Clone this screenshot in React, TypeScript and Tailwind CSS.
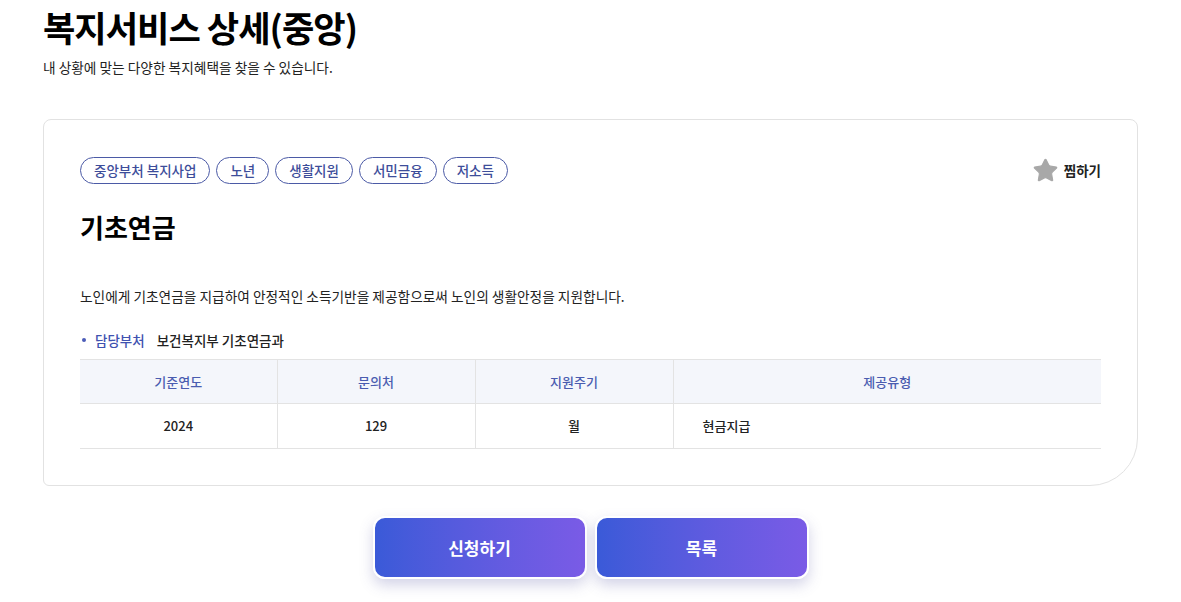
import { Star } from "lucide-react";

const tags = ["중앙부처 복지사업", "노년", "생활지원", "서민금융", "저소득"];

export default function App() {
  return (
    <div
      className="min-h-[602px] w-[1181px] bg-white text-[#111]"
      style={{ fontFamily: '"Noto Sans CJK KR", "Noto Sans", sans-serif' }}
    >
      <div className="px-[43px] pt-[4px]">
        <h1 className="text-[35.2px] font-bold leading-[46px] tracking-[-1px] text-black">
          복지서비스 상세(중앙)
        </h1>
        <p className="mt-[8px] text-[13.7px] leading-[18px] text-[#222]">
          내 상황에 맞는 다양한 복지혜택을 찾을 수 있습니다.
        </p>
      </div>

      <div className="mx-[43px] mt-[43px] rounded-tl-[8px] rounded-tr-[8px] rounded-bl-[6px] rounded-br-[48px] border border-[#e2e2e2] px-[36px] pb-[36px] pt-[37px]">
        <div className="flex items-center justify-between">
          <div className="flex gap-[6px]">
            {tags.map((t) => (
              <span
                key={t}
                className="flex h-[27px] items-center rounded-full border border-[#4b5aa6] px-[13px] text-[13.5px] font-medium text-[#3d4d9a]"
              >
                {t}
              </span>
            ))}
          </div>
          <button className="flex items-center gap-[5px] text-[13.5px] font-bold text-[#222]">
            <Star className="h-[27px] w-[27px] fill-[#a8a8a8] text-[#a8a8a8]" strokeWidth={1} />
            찜하기
          </button>
        </div>

        <h2 className="mt-[23px] text-[26px] font-bold leading-[40px] text-black">기초연금</h2>

        <p className="mt-[39px] text-[13.7px] leading-[20px] text-[#222]">
          노인에게 기초연금을 지급하여 안정적인 소득기반을 제공함으로써 노인의 생활안정을 지원합니다.
        </p>

        <div className="mt-[24px] flex items-center text-[13.5px] leading-[20px]">
          <span className="ml-[2px] mr-[9px] h-[4px] w-[4px] rounded-full bg-[#4b5cb8]" />
          <span className="font-medium text-[#3f52b0]">담당부처</span>
          <span className="ml-[12px] font-medium text-[#222]">보건복지부 기초연금과</span>
        </div>

        <table className="mt-[9px] w-full border-collapse text-[13px]">
          <thead>
            <tr className="h-[44px] border-y border-[#e3e3e3] bg-[#f4f6fb] text-[#4a5cb0]">
              <th className="w-[197px] border-r border-[#e3e3e3] font-medium">기준연도</th>
              <th className="w-[198px] border-r border-[#e3e3e3] font-medium">문의처</th>
              <th className="w-[198px] border-r border-[#e3e3e3] font-medium">지원주기</th>
              <th className="font-medium">제공유형</th>
            </tr>
          </thead>
          <tbody>
            <tr className="h-[45px] border-b border-[#e3e3e3] font-medium text-[#222]">
              <td className="border-r border-[#e3e3e3] text-center">2024</td>
              <td className="border-r border-[#e3e3e3] text-center">129</td>
              <td className="border-r border-[#e3e3e3] text-center">월</td>
              <td className="pl-[29px] text-left">현금지급</td>
            </tr>
          </tbody>
        </table>
      </div>

      <div className="mt-[30px] flex justify-center gap-[8px]">
        {["신청하기", "목록"].map((b) => (
          <button
            key={b}
            className="h-[63px] w-[214px] rounded-[12px] border-2 border-white bg-gradient-to-r from-[#3a5ad8] to-[#7a5be6] text-[17px] font-bold text-white shadow-[0_6px_14px_rgba(80,80,160,0.25)]"
          >
            {b}
          </button>
        ))}
      </div>
    </div>
  );
}
